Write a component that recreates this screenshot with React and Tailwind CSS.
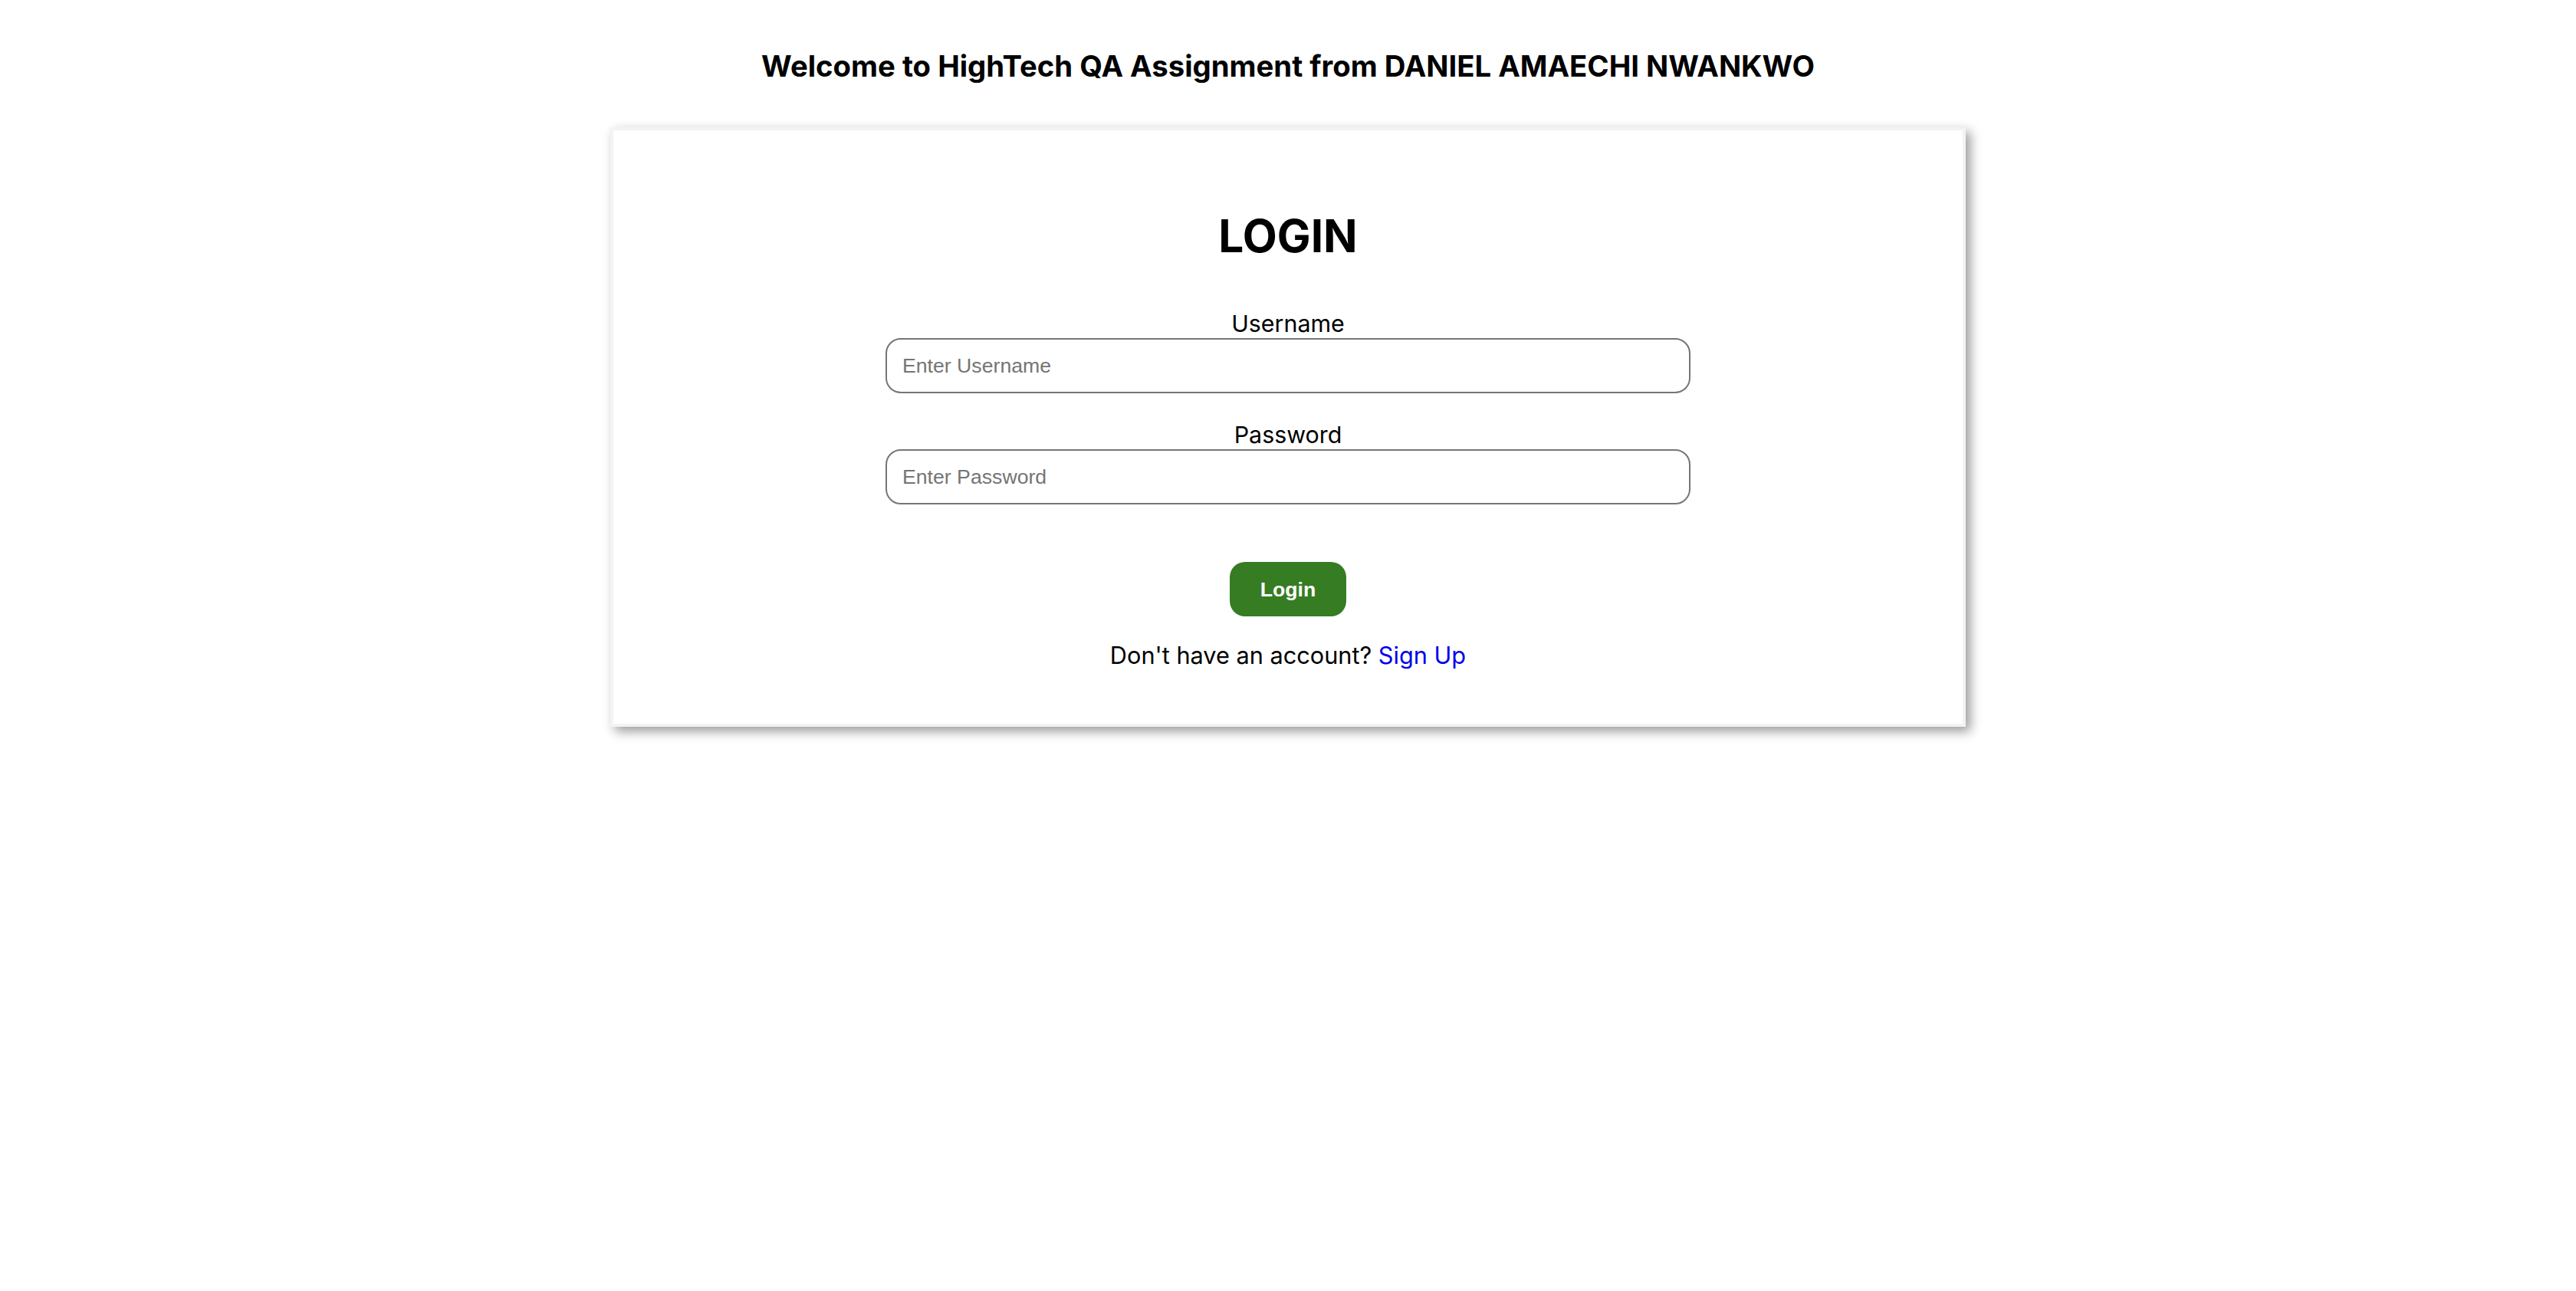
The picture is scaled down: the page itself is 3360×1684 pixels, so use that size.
export default function App() {
  return (
    <div className="min-h-screen bg-white flex flex-col items-center font-['Inter',sans-serif] text-black">
      <h3 className="mt-[62px] text-[38.3px] leading-[48px] font-bold">
        Welcome to HighTech QA Assignment from DANIEL AMAECHI NWANKWO
      </h3>

      {/* Login card */}
      <div className="mt-[56px] w-[1768px] bg-white border-4 border-[#f3f3f3] shadow-[6px_6px_14px_rgba(0,0,0,0.4)] flex flex-col items-center pt-[99px] pb-[70px]">
        <h1 className="text-[58.5px] leading-[78px] font-bold">LOGIN</h1>

        <div className="mt-[56px] flex flex-col items-center">
          <label className="text-[30.4px] leading-[38px]">Username</label>
          <input
            type="text"
            placeholder="Enter Username"
            className="w-[1050px] h-[72px] border-2 border-[#767676] rounded-[20px] px-[20px] text-[26.67px] font-['Liberation_Sans',Arial,sans-serif] placeholder:text-[#757575] outline-none"
          />
        </div>

        <div className="mt-[35px] flex flex-col items-center">
          <label className="text-[30.4px] leading-[38px]">Password</label>
          <input
            type="password"
            placeholder="Enter Password"
            className="w-[1050px] h-[72px] border-2 border-[#767676] rounded-[20px] px-[20px] text-[26.67px] font-['Liberation_Sans',Arial,sans-serif] placeholder:text-[#757575] outline-none"
          />
        </div>

        <button className="mt-[75px] h-[71px] px-[40px] rounded-[20px] bg-[#367c22] text-white font-bold text-[26.67px] font-['Liberation_Sans',Arial,sans-serif]">
          Login
        </button>

        <p className="mt-[32px] text-[30.7px] leading-[38px]">
          Don't have an account? <a href="#" className="text-[#0000ee]">Sign Up</a>
        </p>
      </div>
    </div>
  );
}
